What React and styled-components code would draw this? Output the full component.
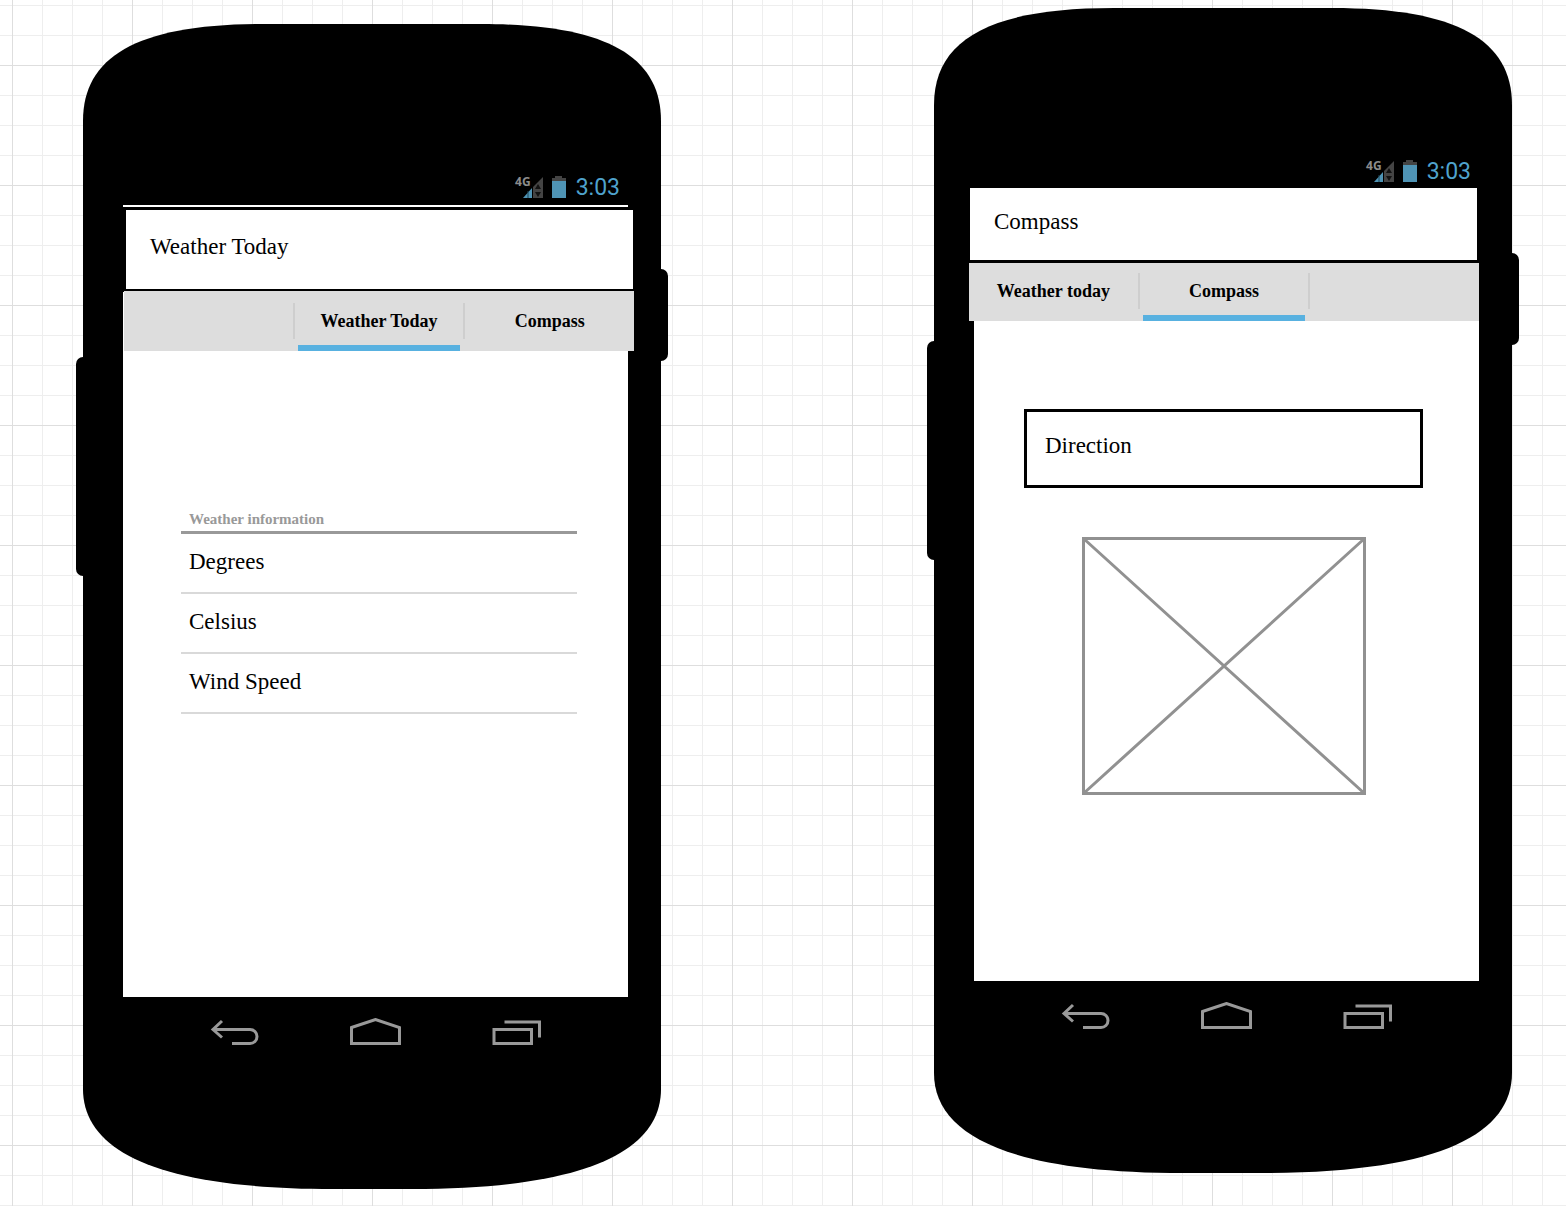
import React from "react";
import styled, { createGlobalStyle } from "styled-components";

const serif = '"Liberation Serif", "Times New Roman", serif';

const GlobalStyle = createGlobalStyle`
  *, *::before, *::after { box-sizing: border-box; }
  body { margin: 0; background: #fff; color: #000; font-family: ${serif}; }
  h1, h2, p, ul { margin: 0; padding: 0; }
`;

const Board = styled.main`
  display: flex;
  justify-content: space-between;
  align-items: flex-start;
  min-height: 100vh;
  padding: 8px 54px 16px 83px;
  background-color: #fff;
  background-image:
    linear-gradient(90deg, #dedede 1px, transparent 1px),
    linear-gradient(#dedede 1px, transparent 1px),
    linear-gradient(90deg, #eee 1px, transparent 1px),
    linear-gradient(#eee 1px, transparent 1px);
  background-size: 120px 120px, 120px 120px, 30px 30px, 30px 30px;
  background-position: 12px 65px, 12px 65px, 12px 5px, 12px 5px;
`;

const Device = styled.section`
  position: relative;
  display: flex;
  flex-direction: column;
  flex: 0 1 578px;
  margin-top: ${(p) => (p.$lowered ? 16 : 0)}px;
  padding: 152px 33px 143px 40px;
`;

const Casing = styled.svg`
  position: absolute;
  inset: 0;
  width: 100%;
  height: 100%;
  overflow: visible;
`;

const StatusBar = styled.div`
  position: relative;
  display: flex;
  justify-content: flex-end;
  align-items: flex-start;
  height: 24px;
  margin-bottom: 5px;
  padding-right: 8px;
`;

const Network = styled.span`
  margin-right: -8px;
  color: #8c8c8c;
  font: bold 12px/12px "Open Sans", sans-serif;
`;

const StatusIcon = styled.svg`
  margin-right: ${(p) => p.$gap}px;
`;

const Clock = styled.time`
  color: #4fa3cd;
  font: 23px/24px Roboto, sans-serif;
`;

const Screen = styled.div`
  position: relative;
  min-height: 792px;
  padding-top: ${(p) => (p.$inset ? 2 : 0)}px;
  background: #fff;
`;

const AppBar = styled.header`
  position: relative;
  z-index: ${(p) => (p.$raised ? 1 : 0)};
  display: flex;
  align-items: center;
  width: calc(100% + 8px);
  height: ${(p) => (p.$raised ? 78 : 85)}px;
  margin: ${(p) => (p.$raised ? "-4px 0 0 -7px" : "0")};
  padding: 0 24px 5px;
  border: 3px solid #000;
  background: #fff;
`;

const Title = styled.h1`
  font-size: 23px;
  line-height: 28px;
  font-weight: normal;
`;

const Tabs = styled.nav`
  position: relative;
  display: flex;
  align-items: center;
  width: calc(100% + 5px);
  height: 60px;
  margin: ${(p) => (p.$shifted ? "-2px 0 0 -5px" : "-1px 0 0 1px")};
  background: #ddd;
`;

const Tab = styled.button`
  flex: 1 1 0;
  height: 60px;
  margin: 0 3px;
  padding: 0;
  border: 0 solid transparent;
  border-width: 6px 0;
  border-bottom-color: ${(p) => (p.$active ? "#58b1e0" : "transparent")};
  background: none;
  color: #000;
  font: bold 18px/24px ${serif};
`;

const EmptyTab = styled.span`
  flex: 1 1 0;
  margin: 0 3px;
`;

const Divider = styled.span`
  width: 2px;
  height: 36px;
  background: #cecece;
`;

const WeatherList = styled.section`
  margin: 157px 51px 0 58px;
`;

const ListHeading = styled.h2`
  padding: 0 8px;
  border-bottom: 3px solid #999;
  color: #999;
  font-size: 15px;
  line-height: 23px;
`;

const Rows = styled.ul`
  list-style: none;
`;

const Row = styled.li`
  height: 60px;
  padding: 0 8px;
  border-bottom: 2px solid #d9d9d9;
  font-size: 23px;
  line-height: 56px;
`;

const CompassBody = styled.div`
  display: flex;
  flex-direction: column;
  align-items: center;
  gap: 49px;
  padding: 88px 56px 0 50px;
`;

const Direction = styled.p`
  display: flex;
  align-items: center;
  width: 100%;
  height: 79px;
  padding: 0 18px 5px;
  border: 3px solid #000;
  font-size: 23px;
  line-height: 28px;
`;

const ImagePlaceholder = styled.svg`
  width: 100%;
  max-width: 284px;
`;

const NavBar = styled.nav`
  position: relative;
  display: flex;
  margin: 21px 41px 0;
`;

const NavButton = styled.button`
  display: flex;
  flex: 1 1 0;
  justify-content: center;
  padding: 0;
  border: 0;
  background: none;
`;

const navIcons = {
  Back: "M13 3L4 11.5L13 19.5M4 11.5H41A7 7 0 0 1 41 25.5H23",
  Home: "M1.5 9.5L25.5 1.5L49.5 9.5V25.5H1.5Z",
  Recents: "M3 11.5H40.5V25.5H3ZM13.5 4H48.5V19.5",
};

function Phone({ lowered, name, children }) {
  return (
    <Device $lowered={lowered} aria-label={name}>
      <Casing viewBox="0 0 578 1165" preserveAspectRatio="none" aria-hidden="true">
        <rect x="-7" y="333" width="20" height="219" rx="7" />
        <rect x="565" y="245" width="20" height="92" rx="7" />
        <path d="M0 97C0 32 55 0 180 0H398C523 0 578 32 578 97V1065C578 1125 508 1165 328 1165H250C70 1165 0 1125 0 1065Z" />
      </Casing>
      <StatusBar>
        <Network>4G</Network>
        <StatusIcon $gap={7} width="21" height="24" viewBox="0 0 21 24" aria-hidden="true">
          <path d="M20 1V22H10V11Z" fill="#444" />
          <path d="M0 22L9 12V22Z" fill="#4f94b5" />
          <path d="M5 15V22" stroke="#1d4659" />
          <path d="M12 13L15 8L18 13ZM12 16H18L15 21Z" fill="#111" />
        </StatusIcon>
        <StatusIcon $gap={9} width="16" height="24" viewBox="0 0 16 24" aria-hidden="true">
          <path d="M1 2H4V0H11V2H15V6H1Z" fill="#444" />
          <path d="M1 5H15V22H1Z" fill="#4f94b5" />
        </StatusIcon>
        <Clock>3:03</Clock>
      </StatusBar>
      {children}
      <NavBar aria-label="System">
        {Object.entries(navIcons).map(([label, d]) => (
          <NavButton key={label} type="button" aria-label={label}>
            <svg width="52" height="28" viewBox="0 0 52 28" fill="none" stroke="#999" strokeWidth="3">
              <path d={d} />
            </svg>
          </NavButton>
        ))}
      </NavBar>
    </Device>
  );
}

export default function App() {
  return (
    <>
      <GlobalStyle />
      <Board>
        <Phone lowered name="Weather screen">
          <Screen $inset>
            <AppBar>
              <Title>Weather Today</Title>
            </AppBar>
            <Tabs>
              <EmptyTab />
              <Divider />
              <Tab type="button" $active>Weather Today</Tab>
              <Divider />
              <Tab type="button">Compass</Tab>
            </Tabs>
            <WeatherList>
              <ListHeading>Weather information</ListHeading>
              <Rows>
                {["Degrees", "Celsius", "Wind Speed"].map((label) => (
                  <Row key={label}>{label}</Row>
                ))}
              </Rows>
            </WeatherList>
          </Screen>
        </Phone>
        <Phone name="Compass screen">
          <Screen>
            <AppBar $raised>
              <Title>Compass</Title>
            </AppBar>
            <Tabs $shifted>
              <Tab type="button">Weather today</Tab>
              <Divider />
              <Tab type="button" $active>Compass</Tab>
              <Divider />
              <EmptyTab />
            </Tabs>
            <CompassBody>
              <Direction>Direction</Direction>
              <ImagePlaceholder viewBox="0 0 284 258" fill="none" stroke="#919191" strokeWidth="3" role="img" aria-label="Compass image">
                <path d="M1.5 1.5H282.5V256.5H1.5ZL282.5 256.5M282.5 1.5L1.5 256.5" />
              </ImagePlaceholder>
            </CompassBody>
          </Screen>
        </Phone>
      </Board>
    </>
  );
}
